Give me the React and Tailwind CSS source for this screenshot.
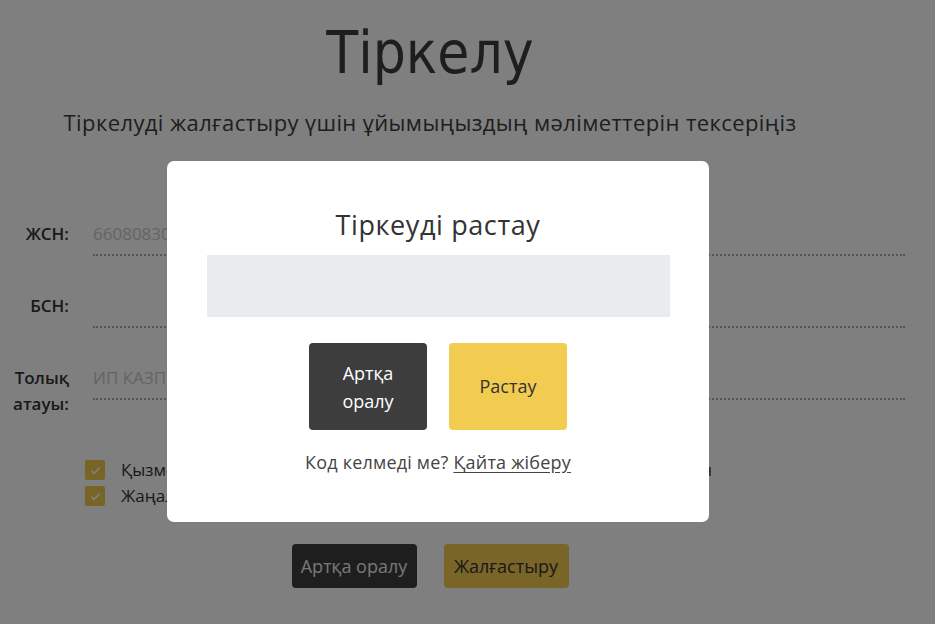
import React from "react";

const Field = ({ label, value }) => (
  <div className="flex items-start">
    <div className="w-[69px] shrink-0 text-right text-[17px] font-semibold leading-[26px] text-[#333]">
      {label}
    </div>
    <div className="ml-[24px] h-[35px] w-[812px] border-b-2 border-dotted border-[#aaa] text-[17px] leading-[26px] text-[#c8c8c8]">
      {value}
    </div>
  </div>
);

const Check = ({ children }) => (
  <label className="flex items-center gap-[16px] whitespace-nowrap text-[17px] leading-[26px] text-[#333]">
    <span className="flex h-[20px] w-[20px] shrink-0 items-center justify-center rounded-[2px] bg-[#f0c94e]">
      <svg viewBox="0 0 16 16" className="h-[13px] w-[13px]" fill="none" stroke="#fff" strokeWidth="2">
        <path d="M3 8.5l3.2 3L13 4.5" />
      </svg>
    </span>
    {children}
  </label>
);

export default function App() {
  return (
    <div
      className="h-[624px] w-[935px] bg-white"
      style={{ fontFamily: '"Open Sans", "Noto Sans", sans-serif' }}
    >
      {/* page behind the dialog */}
      <div className="flex w-[860px] flex-col items-center pt-[20px]">
        <h1
          className="text-[58px] leading-[66px] text-[#3d3d3d] [font-stretch:condensed]"
          style={{ fontFamily: '"DejaVu Sans Condensed", "Liberation Sans Narrow", "Open Sans", sans-serif' }}
        >
          Тіркелу
        </h1>
        <p className="mt-[20px] text-[22px] tracking-[0.4px] text-[#3d3d3d]">
          Тіркелуді жалғастыру үшін ұйымыңыздың мәліметтерін тексеріңіз
        </p>
      </div>

      <div className="mt-[82px] flex flex-col gap-[37px]">
        <Field label="ЖСН:" value="660808300000" />
        <Field label="БСН:" value="" />
        <Field label="Толық атауы:" value="ИП КАЗПРОМСЕРВИС" />
      </div>

      <div className="ml-[85px] mt-[40px] flex flex-col">
        <Check>Қызмет көрсету шарттарымен және құпиялылық саясатымен келісемін</Check>
        <Check>Жаңалықтар мен ұсыныстарды алуға келісемін</Check>
      </div>

      <div className="mt-[35px] flex w-[860px] justify-center gap-[27px]">
        <button className="h-[44px] w-[125px] rounded-[4px] bg-[#3d3d3d] text-[18px] text-[#eee]">
          Артқа оралу
        </button>
        <button className="h-[44px] w-[125px] rounded-[4px] bg-[#f2cb51] text-[18px] text-[#333]">
          Жалғастыру
        </button>
      </div>

      {/* dialog */}
      <div className="fixed inset-0 bg-black/50">
        <div className="ml-[167px] mt-[161px] flex w-[542px] flex-col items-center rounded-[7px] bg-white pb-[46px] pt-[44px]">
          <h2 className="text-[27px] leading-[40px] tracking-[0.6px] text-[#333]">Тіркеуді растау</h2>
          <div className="mt-[10px] h-[62px] w-[463px] bg-[#e9ecef]" />
          <div className="mt-[26px] flex gap-[22px]">
            <button className="h-[87px] w-[118px] rounded-[4px] bg-[#3d3d3d] px-[20px] text-[18px] leading-[28px] text-white">
              Артқа оралу
            </button>
            <button className="h-[87px] w-[118px] rounded-[4px] bg-[#f2cb51] text-[18px] text-[#333]">
              Растау
            </button>
          </div>
          <p className="mt-[19px] text-[18px] tracking-[0.2px] text-[#444]">
            Код келмеді ме? <a className="underline underline-offset-[3px]">Қайта жіберу</a>
          </p>
        </div>
      </div>
    </div>
  );
}
